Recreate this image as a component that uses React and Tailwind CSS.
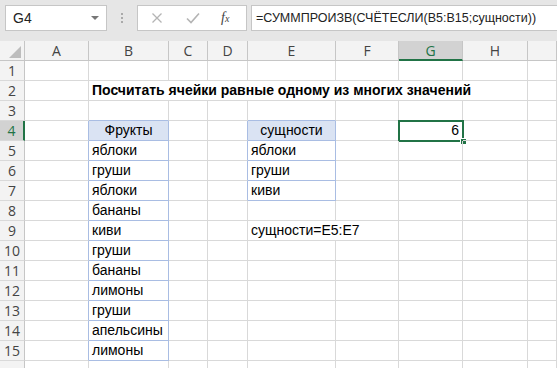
import React from "react";

const colNames = ["A", "B", "C", "D", "E", "F", "G", "H", ""];
const colW = [
  "w-[64px]",
  "w-[80px]",
  "w-[39px]",
  "w-[40px]",
  "w-[88px]",
  "w-[63px]",
  "w-[64px]",
  "w-[65px]",
  "flex-1",
];

// cell values by row -> column index (0 = A)
const data = {
  4: { 1: "Фрукты", 4: "сущности", 6: "6" },
  5: { 1: "яблоки", 4: "яблоки" },
  6: { 1: "груши", 4: "груши" },
  7: { 1: "яблоки", 4: "киви" },
  8: { 1: "бананы" },
  9: { 1: "киви" },
  10: { 1: "груши" },
  11: { 1: "бананы" },
  12: { 1: "лимоны" },
  13: { 1: "груши" },
  14: { 1: "апельсины" },
  15: { 1: "лимоны" },
};

// table borders (light blue) for B4:B15 and E4:E7
function borderFor(r, c) {
  const inB = c === 1 && r >= 4 && r <= 15;
  const inE = c === 4 && r >= 4 && r <= 7;
  const rightBlue =
    inB || inE || (c === 0 && r >= 4 && r <= 15) || (c === 3 && r >= 4 && r <= 7);
  const bottomBlue = inB || inE || (c === 1 && r === 3) || (c === 4 && r === 3);
  return (
    (rightBlue ? "border-r-[#a9bde3] " : "border-r-[#d9d9d9] ") +
    (bottomBlue ? "border-b-[#a9bde3]" : "border-b-[#d9d9d9]")
  );
}

const Cell = ({ r, c }) => {
  const val = data[r]?.[c];
  const isHead = r === 4 && (c === 1 || c === 4);
  const isSel = r === 4 && c === 6;
  return (
    <div
      className={`${colW[c]} h-[20px] shrink-0 border-r border-b ${borderFor(r, c)} ${
        isHead ? "bg-[#dae3f3] justify-center" : isSel ? "justify-end pr-[3px]" : "pl-[3px]"
      } flex items-center relative whitespace-nowrap text-[14px] text-black`}
    >
      {val}
      {isSel && (
        <>
          <div className="absolute -top-[1px] -left-[1px] -right-[2px] -bottom-[2px] border-2 border-[#217346]" />
          <div className="absolute -right-[5px] -bottom-[5px] w-[7px] h-[7px] bg-[#217346] border border-white" />
        </>
      )}
    </div>
  );
};

const RowHead = ({ r }) => (
  <div
    className={`w-[25px] h-[20px] shrink-0 flex items-center justify-center border-b border-b-[#d9d9d9] text-[14px] ${
      r === 4
        ? "bg-[#d2d2d2] text-[#217346] border-r-2 border-r-[#217346]"
        : "bg-[#f3f3f3] text-[#444] border-r border-r-[#c6c6c6]"
    }`}
    style={{ fontFamily: "'Open Sans', sans-serif" }}
  >
    {r < 16 ? r : null}
  </div>
);

const Row = ({ r }) => {
  if (r === 2) {
    return (
      <div className="flex">
        <RowHead r={r} />
        <Cell r={r} c={0} />
        <div className="w-[439px] h-[20px] shrink-0 pl-[3px] flex items-center border-r border-b border-[#d9d9d9] whitespace-nowrap font-bold text-[14px] text-black">
          Посчитать ячейки равные одному из многих значений
        </div>
        <Cell r={r} c={8} />
      </div>
    );
  }
  if (r === 9) {
    return (
      <div className="flex">
        <RowHead r={r} />
        {[0, 1, 2, 3].map((c) => (
          <Cell key={c} r={r} c={c} />
        ))}
        <div className="w-[151px] h-[20px] shrink-0 pl-[3px] flex items-center border-r border-b border-[#d9d9d9] whitespace-nowrap text-[14px] text-black">
          сущности=E5:E7
        </div>
        {[6, 7, 8].map((c) => (
          <Cell key={c} r={r} c={c} />
        ))}
      </div>
    );
  }
  return (
    <div className="flex">
      <RowHead r={r} />
      {colNames.map((_, c) => (
        <Cell key={c} r={r} c={c} />
      ))}
    </div>
  );
};

const FormulaBar = () => (
  <div className="h-[41px] bg-[#e6e6e6] flex pt-[5px] pl-[5px]">
    <div className="w-[102px] h-[26px] bg-white border border-[#c6c6c6] flex items-center justify-between pl-[7px] pr-[7px] text-[14px] text-[#222]">
      <span>G4</span>
      <span className="w-0 h-0 border-l-[4px] border-r-[4px] border-t-[4px] border-l-transparent border-r-transparent border-t-[#777]" />
    </div>
    <div className="w-[30px] flex flex-col items-center justify-center gap-[2px] h-[26px]">
      <span className="w-[2px] h-[2px] bg-[#aaa]" />
      <span className="w-[2px] h-[2px] bg-[#aaa]" />
      <span className="w-[2px] h-[2px] bg-[#aaa]" />
    </div>
    <div className="w-[110px] h-[26px] bg-white border border-[#c6c6c6] flex items-center">
      <svg width="12" height="12" viewBox="0 0 12 12" className="ml-[13px]">
        <path d="M1.5 1.5 L10.5 10.5 M10.5 1.5 L1.5 10.5" stroke="#b4b4b4" strokeWidth="1.3" fill="none" />
      </svg>
      <svg width="14" height="12" viewBox="0 0 14 12" className="ml-[23px]">
        <path d="M1 6.5 L5 10.5 L13 1.5" stroke="#b4b4b4" strokeWidth="1.6" fill="none" />
      </svg>
      <span
        className="ml-[21px] italic text-[#444] text-[14px] leading-none"
        style={{ fontFamily: "'Liberation Serif', serif" }}
      >
        f<span className="text-[10px]">x</span>
      </span>
    </div>
    <div className="flex-1 h-[26px] ml-[4px] bg-white border border-[#c6c6c6] border-r-0 flex items-center pl-[4px] text-[12.5px] text-[#222] whitespace-nowrap overflow-hidden">
      =СУММПРОИЗВ(СЧЁТЕСЛИ(B5:B15;сущности))
    </div>
  </div>
);

const ColHeaders = () => (
  <div className="flex bg-[#f3f3f3]" style={{ fontFamily: "'Open Sans', sans-serif" }}>
    <div className="w-[25px] h-[20px] shrink-0 border-r border-b border-[#c6c6c6] relative overflow-hidden">
      <svg width="12" height="12" viewBox="0 0 12 12" className="absolute right-[3px] bottom-[2px]">
        <polygon points="12,0 12,12 0,12" fill="#bdbdbd" />
      </svg>
    </div>
    {colNames.map((n, c) => (
      <div
        key={c}
        className={`${colW[c]} h-[20px] shrink-0 flex items-center justify-center text-[14px] border-r ${
          n === "G"
            ? "bg-[#d2d2d2] text-[#217346] border-b-2 border-b-[#217346] border-r-[#c6c6c6]"
            : "text-[#444] border-b border-[#c6c6c6]"
        }`}
      >
        {n}
      </div>
    ))}
  </div>
);

export default function App() {
  return (
    <div
      className="w-[557px] h-[368px] overflow-hidden bg-white"
      style={{ fontFamily: "'Liberation Sans', Arial, sans-serif" }}
    >
      <FormulaBar />
      <ColHeaders />
      {Array.from({ length: 16 }, (_, i) => (
        <Row key={i} r={i + 1} />
      ))}
    </div>
  );
}
